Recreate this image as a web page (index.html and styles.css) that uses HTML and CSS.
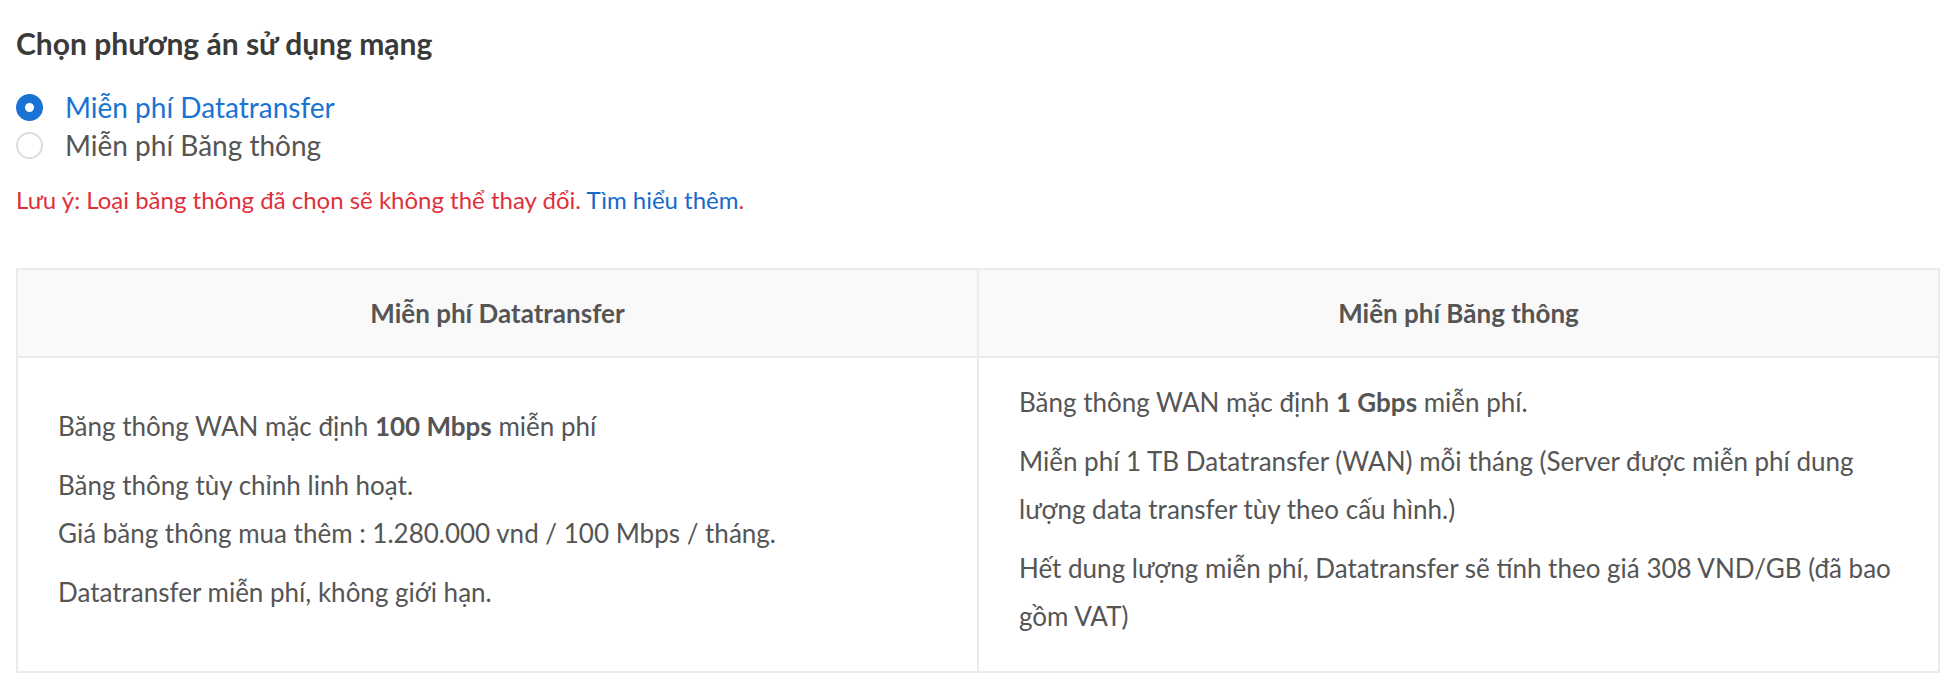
FILE: index.html
```html
<!DOCTYPE html>
<html lang="vi">
<head>
<meta charset="utf-8">
<link rel="stylesheet" href="styles.css">
</head>
<body>
<div class="page">
  <h2 class="title">Chọn phương án sử dụng mạng</h2>
  <div class="radios">
    <label class="radio radio--checked"><span class="dot"></span><span class="radio-label">Miễn phí Datatransfer</span></label>
    <label class="radio"><span class="dot"></span><span class="radio-label">Miễn phí Băng thông</span></label>
  </div>
  <p class="note">Lưu ý: Loại băng thông đã chọn sẽ không thể thay đổi. <a class="note-link" href="#">Tìm hiểu thêm</a>.</p>
  <table class="plans">
    <thead>
      <tr>
        <th>Miễn phí Datatransfer</th>
        <th>Miễn phí Băng thông</th>
      </tr>
    </thead>
    <tbody>
      <tr>
        <td class="cell cell--middle">
          <p>Băng thông WAN mặc định <b>100 Mbps</b> miễn phí</p>
          <p>Băng thông tùy chỉnh linh hoạt.<br>Giá băng thông mua thêm : 1.280.000 vnd / 100 Mbps / tháng.</p>
          <p>Datatransfer miễn phí, không giới hạn.</p>
        </td>
        <td class="cell">
          <p>Băng thông WAN mặc định <b>1 Gbps</b> miễn phí.</p>
          <p>Miễn phí 1 TB Datatransfer (WAN) mỗi tháng (Server được miễn phí dung lượng data transfer tùy theo cấu hình.)</p>
          <p>Hết dung lượng miễn phí, Datatransfer sẽ tính theo giá 308 VND/GB (đã bao gồm VAT)</p>
        </td>
      </tr>
    </tbody>
  </table>
</div>
</body>
</html>
```

FILE: styles.css
```css
* { box-sizing: border-box; }
html, body { margin: 0; padding: 0; background: #fff; }
body {
  font-family: Lato, "Open Sans", sans-serif;
  color: #555;
}
.page {
  padding: 27px 16px 18px 16px;
}
.title {
  margin: 0;
  font-size: 30px;
  line-height: 32px;
  font-weight: 700;
  color: #3a3a3a;
}
.radios {
  display: flex;
  flex-direction: column;
  margin-top: 29px;
}
.radio {
  display: flex;
  align-items: center;
  gap: 22px;
  height: 38px;
  cursor: pointer;
}
.dot {
  width: 27px;
  height: 27px;
  border-radius: 50%;
  border: 2px solid #dcdde3;
  background: #fff;
  flex: none;
}
.radio--checked .dot {
  border: 9.5px solid #1a73d4;
  background: #fff;
}
.radio-label {
  font-size: 28px;
  color: #555;
}
.radio--checked .radio-label { color: #1a73d4; }
.note {
  margin: 22px 0 0 0;
  font-size: 24px;
  line-height: 28px;
  color: #e0303c;
}
.note-link { color: #1769c9; text-decoration: none; }
.plans {
  margin-top: 54px;
  width: 100%;
  border-collapse: collapse;
  table-layout: fixed;
  border: 2px solid #ebebeb;
}
.plans th {
  background: #f9f9f9;
  border: 2px solid #ebebeb;
  height: 88px;
  font-size: 26px;
  font-weight: 700;
  color: #555;
  text-align: center;
}
.cell {
  border: 2px solid #ebebeb;
  padding: 20px 40px 20px 40px;
  vertical-align: top;
  font-size: 26px;
  line-height: 48px;
  color: #555;
}
.cell--middle { vertical-align: middle; }
.cell p { margin: 0 0 11px 0; }
.cell b { font-weight: 700; }
```
